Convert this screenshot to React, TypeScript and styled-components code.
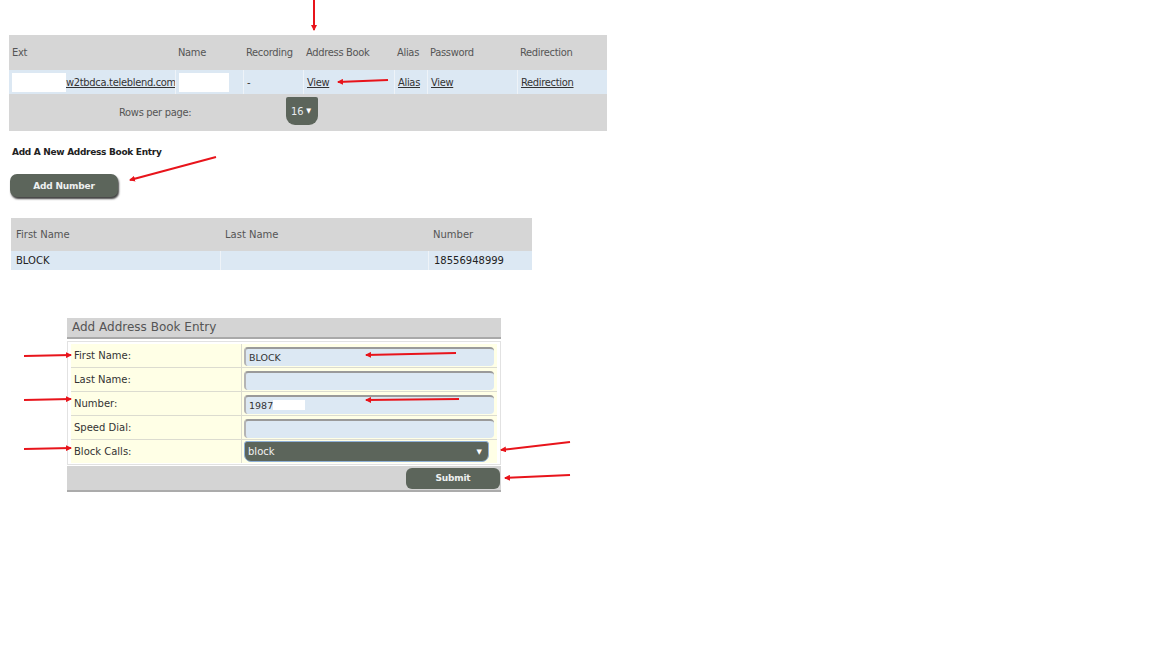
import React from 'react';
import styled, { createGlobalStyle } from 'styled-components';

const GlobalStyle = createGlobalStyle`
  html, body { margin: 0; padding: 0; background: #fff; }
  body { font-family: "DejaVu Sans", Verdana, sans-serif; }
`;

const dark = '#5c655b';
const panelGray = '#d6d6d6';
const rowBlue = '#dce8f3';

const Page = styled.div`
  position: relative;
  width: 1152px;
  height: 648px;
  overflow: hidden;
  padding-top: 35px;
  box-sizing: border-box;
`;

/* ---------- extension grid ---------- */

const ExtPanel = styled.div`
  margin-left: 9px;
  width: 598px;
  background: ${panelGray};
  font-family: "DejaVu Sans Condensed", "Liberation Sans Narrow", sans-serif;
  font-size: 11px;
  letter-spacing: -0.3px;
  color: #555;
`;

const ExtRow = styled.div<{ $data?: boolean }>`
  display: grid;
  grid-template-columns: 166px 68px 60px 91px 33px 90px 90px;
  height: ${({ $data }) => ($data ? 24 : 35)}px;
  background: ${({ $data }) => ($data ? rowBlue : 'transparent')};
  color: ${({ $data }) => ($data ? '#333' : '#555')};
`;

const ExtCell = styled.div<{ $sep?: boolean }>`
  display: flex;
  align-items: center;
  padding-left: 3px;
  border-left: ${({ $sep }) => ($sep ? '1px solid #eef3f8' : 'none')};
  white-space: nowrap;
  overflow: hidden;
`;

const Link = styled.a`
  color: #333;
  text-decoration: underline;
  cursor: pointer;
`;

const Redacted = styled.span<{ $w: number; $h: number }>`
  display: inline-block;
  flex-shrink: 0;
  width: ${({ $w }) => $w}px;
  height: ${({ $h }) => $h}px;
  background: #fff;
`;

const PagerRow = styled.div`
  display: flex;
  align-items: flex-start;
  height: 37px;
  padding-left: 110px;
`;

const PagerLabel = styled.span`
  width: 167px;
  line-height: 37px;
`;

const RowsSelect = styled.div`
  margin-top: 3px;
  width: 32px;
  height: 28px;
  background: ${dark};
  border-radius: 2px 2px 9px 9px;
  color: #e8ecef;
  display: flex;
  align-items: center;
  justify-content: space-between;
  padding: 0 7px 0 5px;
  box-sizing: border-box;
  font-size: 11px;
  letter-spacing: 0;
`;

const Caret = styled.span`
  font-size: 7px;
  color: #fff;
`;

/* ---------- add number section ---------- */

const SectionTitle = styled.div`
  margin: 16px 0 0 12px;
  font-size: 9px;
  font-weight: bold;
  letter-spacing: -0.3px;
  color: #222;
`;

const DarkButton = styled.button<{ $w: number }>`
  width: ${({ $w }) => $w}px;
  height: 22px;
  border: none;
  border-radius: 7px;
  background: ${dark};
  color: #eef0f0;
  font-family: "DejaVu Sans", Verdana, sans-serif;
  font-size: 9px;
  font-weight: bold;
  letter-spacing: -0.2px;
  cursor: pointer;
  padding: 0;
`;

const AddButton = styled(DarkButton)`
  margin: 17px 0 0 10px;
  display: block;
  height: 23px;
  box-shadow: 1px 2px 2px rgba(0, 0, 0, 0.75);
`;

/* ---------- address book table ---------- */

const BookTable = styled.div`
  margin: 21px 0 0 11px;
  width: 521px;
  font-size: 10px;
`;

const BookRow = styled.div<{ $data?: boolean }>`
  display: grid;
  grid-template-columns: 209px 208px 104px;
  height: ${({ $data }) => ($data ? 19 : 33)}px;
  background: ${({ $data }) => ($data ? rowBlue : panelGray)};
  color: ${({ $data }) => ($data ? '#222' : '#555')};
`;

const BookCell = styled.div<{ $sep?: boolean }>`
  display: flex;
  align-items: center;
  padding-left: 5px;
  border-left: ${({ $sep }) => ($sep ? '1px solid #eef3f8' : 'none')};
`;

/* ---------- form ---------- */

const FormPanel = styled.div`
  margin: 48px 0 0 67px;
  width: 434px;
`;

const FormTitle = styled.div`
  height: 19px;
  background: #d4d4d4;
  border-bottom: 2px solid #a9a9a9;
  color: #555;
  font-size: 12px;
  padding-left: 5px;
  line-height: 19px;
`;

const FormBody = styled.div`
  margin-top: 2px;
  border: 1px solid #e2e2e2;
  padding: 2px 3px 1px 3px;
  display: grid;
  grid-template-columns: 171px 1fr;
`;

const Label = styled.div<{ $last?: boolean }>`
  height: 23px;
  background: #ffffe6;
  border-bottom: ${({ $last }) => ($last ? 'none' : '1px solid #dcdcd0')};
  border-right: 1px solid #dcdcd0;
  display: flex;
  align-items: center;
  padding-left: 3px;
  font-size: 10px;
  color: #333;
`;

const Field = styled.div<{ $last?: boolean }>`
  height: 23px;
  background: #ffffe6;
  border-bottom: ${({ $last }) => ($last ? 'none' : '1px solid #dcdcd0')};
  display: flex;
  align-items: center;
  padding: 0 3px 0 2px;
`;

const Input = styled.div`
  flex: 1;
  height: 19px;
  margin-top: 1px;
  background: ${rowBlue};
  border-top: 2px solid #9a9a9a;
  border-left: 2px solid #b4b4b4;
  border-radius: 4px;
  box-sizing: border-box;
  display: flex;
  align-items: center;
  padding-left: 3px;
  font-size: 9.5px;
  color: #333;
`;

const Select = styled.div`
  flex: 1;
  margin-right: 5px;
  height: 21px;
  background: ${dark};
  border: 1px solid #8fb0d8;
  border-radius: 3px 3px 7px 7px;
  box-sizing: border-box;
  display: flex;
  align-items: center;
  justify-content: space-between;
  padding: 0 6px 0 3px;
  color: #f2f2f2;
  font-size: 10px;
`;

const FormFooter = styled.div`
  margin-top: 1px;
  height: 24px;
  background: #d4d4d4;
  border-bottom: 2px solid #ababab;
  display: flex;
  justify-content: flex-end;
  align-items: center;
  padding-right: 1px;
`;

const SubmitButton = styled(DarkButton)`
  height: 21px;
  border-radius: 6px;
`;

/* ---------- annotation arrows ---------- */

const Overlay = styled.svg`
  position: absolute;
  left: 0;
  top: 0;
  pointer-events: none;
`;

const arrows: [number, number, number, number][] = [
  [314, 0, 314, 30],
  [388, 80, 338, 82],
  [216, 157, 130, 180],
  [24, 356, 71, 355],
  [24, 400, 71, 399],
  [24, 449, 71, 448],
  [456, 353, 366, 355],
  [459, 399, 366, 400],
  [570, 442, 501, 450],
  [570, 475, 505, 478],
];

const Arrows = () => (
  <Overlay width={1152} height={648}>
    <defs>
      <marker id="head" markerWidth="6" markerHeight="6" refX="5" refY="3" orient="auto" markerUnits="userSpaceOnUse">
        <path d="M0,0 L6,3 L0,6 z" fill="#e8141b" />
      </marker>
    </defs>
    {arrows.map(([x1, y1, x2, y2], i) => (
      <line key={i} x1={x1} y1={y1} x2={x2} y2={y2} stroke="#e8141b" strokeWidth={2} markerEnd="url(#head)" />
    ))}
  </Overlay>
);

const formRows = [
  { label: 'First Name:', value: 'BLOCK' },
  { label: 'Last Name:', value: '' },
  { label: 'Number:', value: '1987', redact: true },
  { label: 'Speed Dial:', value: '' },
];

export default function App() {
  return (
    <Page>
      <GlobalStyle />

      <ExtPanel>
        <ExtRow>
          <ExtCell>Ext</ExtCell>
          <ExtCell>Name</ExtCell>
          <ExtCell>Recording</ExtCell>
          <ExtCell>Address Book</ExtCell>
          <ExtCell>Alias</ExtCell>
          <ExtCell>Password</ExtCell>
          <ExtCell>Redirection</ExtCell>
        </ExtRow>
        <ExtRow $data>
          <ExtCell>
            <Redacted $w={54} $h={19} />
            <Link>w2tbdca.teleblend.com</Link>
          </ExtCell>
          <ExtCell $sep>
            <Redacted $w={50} $h={19} />
          </ExtCell>
          <ExtCell $sep>-</ExtCell>
          <ExtCell $sep>
            <Link>View</Link>
          </ExtCell>
          <ExtCell $sep>
            <Link>Alias</Link>
          </ExtCell>
          <ExtCell $sep>
            <Link>View</Link>
          </ExtCell>
          <ExtCell $sep>
            <Link>Redirection</Link>
          </ExtCell>
        </ExtRow>
        <PagerRow>
          <PagerLabel>Rows per page:</PagerLabel>
          <RowsSelect>
            16 <Caret>▼</Caret>
          </RowsSelect>
        </PagerRow>
      </ExtPanel>

      <SectionTitle>Add A New Address Book Entry</SectionTitle>
      <AddButton $w={108}>Add Number</AddButton>

      <BookTable>
        <BookRow>
          <BookCell>First Name</BookCell>
          <BookCell>Last Name</BookCell>
          <BookCell>Number</BookCell>
        </BookRow>
        <BookRow $data>
          <BookCell>BLOCK</BookCell>
          <BookCell $sep />
          <BookCell $sep>18556948999</BookCell>
        </BookRow>
      </BookTable>

      <FormPanel>
        <FormTitle>Add Address Book Entry</FormTitle>
        <FormBody>
          {formRows.map((r) => (
            <React.Fragment key={r.label}>
              <Label>{r.label}</Label>
              <Field>
                <Input>
                  {r.value}
                  {r.redact && <Redacted $w={32} $h={10} />}
                </Input>
              </Field>
            </React.Fragment>
          ))}
          <Label $last>Block Calls:</Label>
          <Field $last>
            <Select>
              block <Caret>▼</Caret>
            </Select>
          </Field>
        </FormBody>
        <FormFooter>
          <SubmitButton $w={94}>Submit</SubmitButton>
        </FormFooter>
      </FormPanel>

      <Arrows />
    </Page>
  );
}
